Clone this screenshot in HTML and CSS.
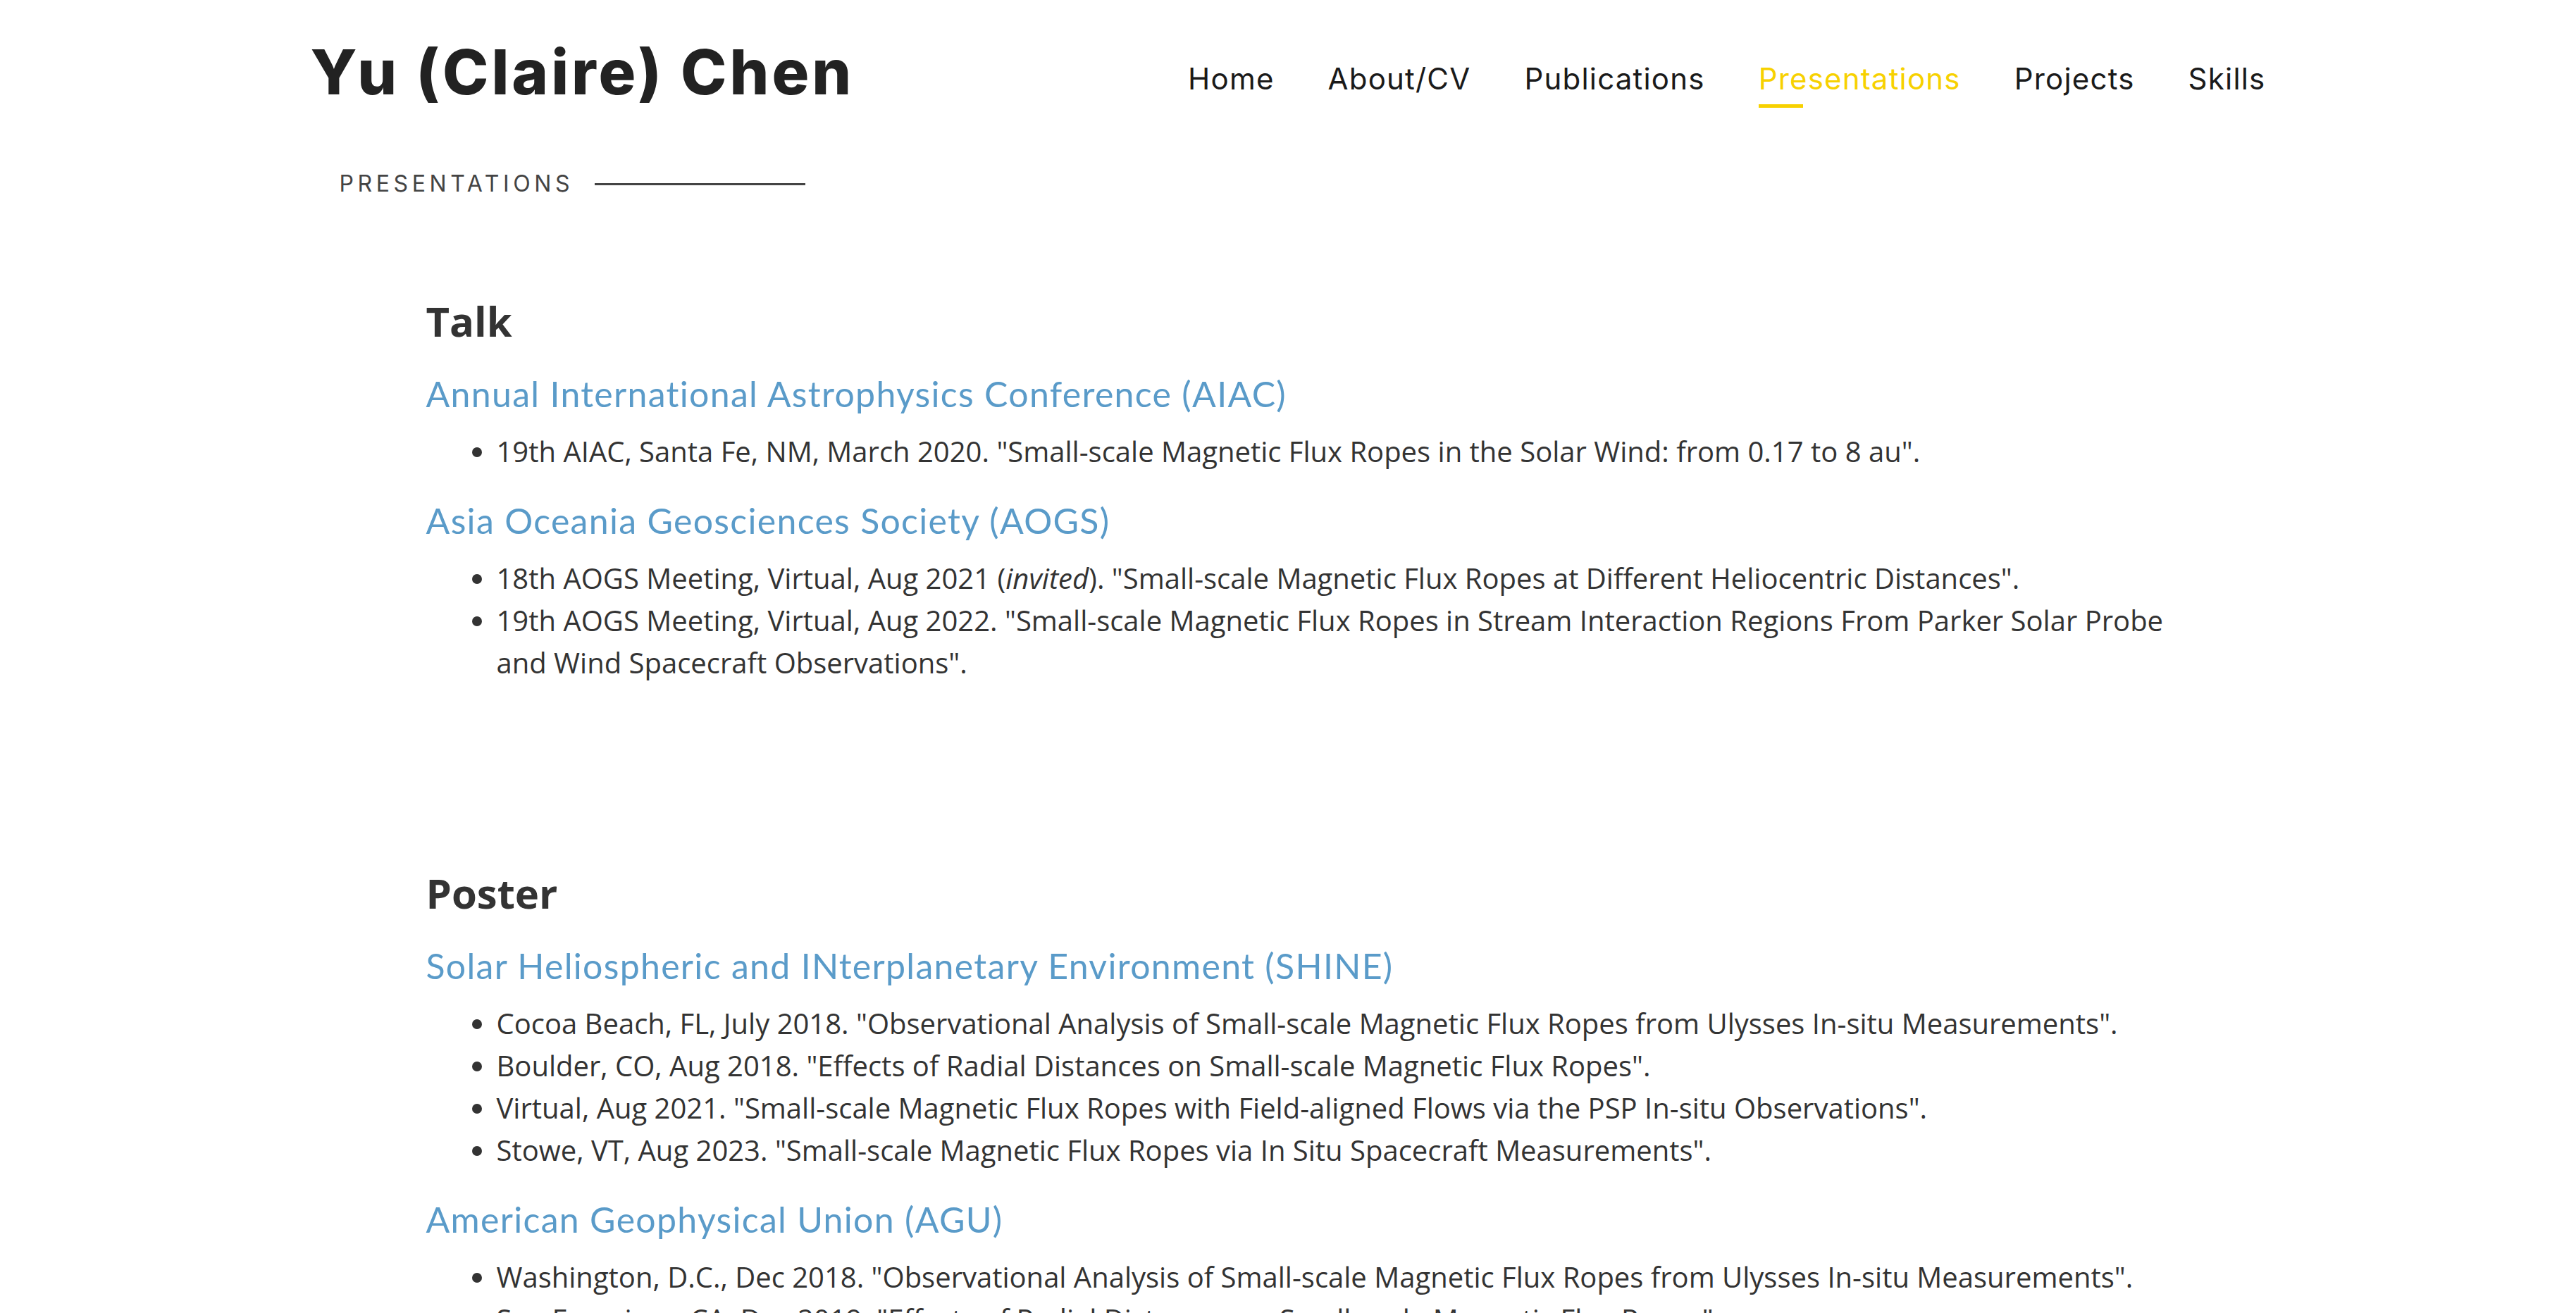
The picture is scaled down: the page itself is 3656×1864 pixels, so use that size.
FILE: index.html
```html
<!DOCTYPE html>
<html lang="en">
<head>
<meta charset="utf-8">
<title>Presentations | Yu (Claire) Chen</title>
<link rel="stylesheet" href="styles.css">
</head>
<body>
<header class="site-header">
  <h1 class="site-title">Yu (Claire) Chen</h1>
  <nav class="site-nav">
    <a class="nav-link" href="#">Home</a>
    <a class="nav-link" href="#">About/CV</a>
    <a class="nav-link" href="#">Publications</a>
    <a class="nav-link is-active" href="#">Presentations</a>
    <a class="nav-link" href="#">Projects</a>
    <a class="nav-link" href="#">Skills</a>
  </nav>
</header>
<main class="page">
  <div class="page-label">
    <span class="page-label-text">PRESENTATIONS</span>
    <span class="page-label-rule"></span>
  </div>
  <article class="content">
    <section class="group">
      <h3 class="group-title">Talk</h3>
      <h4 class="venue"><a href="#">Annual International Astrophysics Conference (AIAC)</a></h4>
      <ul class="items">
        <li>19th AIAC, Santa Fe, NM, March 2020. "Small-scale Magnetic Flux Ropes in the Solar Wind: from 0.17 to 8 au".</li>
      </ul>
      <h4 class="venue"><a href="#">Asia Oceania Geosciences Society (AOGS)</a></h4>
      <ul class="items">
        <li>18th AOGS Meeting, Virtual, Aug 2021 (<em>invited</em>). "Small-scale Magnetic Flux Ropes at Different Heliocentric Distances".</li>
        <li>19th AOGS Meeting, Virtual, Aug 2022. "Small-scale Magnetic Flux Ropes in Stream Interaction Regions From Parker Solar Probe and Wind Spacecraft Observations".</li>
      </ul>
    </section>
    <section class="group">
      <h3 class="group-title">Poster</h3>
      <h4 class="venue"><a href="#">Solar Heliospheric and INterplanetary Environment (SHINE)</a></h4>
      <ul class="items">
        <li>Cocoa Beach, FL, July 2018. "Observational Analysis of Small-scale Magnetic Flux Ropes from Ulysses In-situ Measurements".</li>
        <li>Boulder, CO, Aug 2018. "Effects of Radial Distances on Small-scale Magnetic Flux Ropes".</li>
        <li>Virtual, Aug 2021. "Small-scale Magnetic Flux Ropes with Field-aligned Flows via the PSP In-situ Observations".</li>
        <li>Stowe, VT, Aug 2023. "Small-scale Magnetic Flux Ropes via In Situ Spacecraft Measurements".</li>
      </ul>
      <h4 class="venue"><a href="#">American Geophysical Union (AGU)</a></h4>
      <ul class="items">
        <li>Washington, D.C., Dec 2018. "Observational Analysis of Small-scale Magnetic Flux Ropes from Ulysses In-situ Measurements".</li>
        <li>San Francisco, CA, Dec 2019. "Effects of Radial Distances on Small-scale Magnetic Flux Ropes".</li>
      </ul>
    </section>
  </article>
</main>
</body>
</html>
```
FILE: styles.css
```css
* { box-sizing: border-box; }

html, body {
  margin: 0;
  padding: 0;
  background: #ffffff;
}

body {
  font-family: "Open Sans", "Noto Sans", sans-serif;
  color: #333333;
}

.site-header {
  width: 2775px;
  margin: 0 auto;
  padding-top: 58px;
  display: flex;
  justify-content: space-between;
  align-items: flex-start;
}

.site-title {
  margin: 0;
  font-family: "Inter", "Noto Sans", sans-serif;
  font-weight: 800;
  font-size: 88px;
  line-height: 88px;
  color: #222222;
  letter-spacing: 4px;
}

.site-nav {
  display: flex;
  gap: 76px;
  padding-top: 33px;
}

.nav-link {
  position: relative;
  font-family: "Inter", "Noto Sans", sans-serif;
  font-weight: 400;
  font-size: 42px;
  line-height: 42px;
  letter-spacing: 1.2px;
  color: #1a1a1a;
  text-decoration: none;
}

.nav-link.is-active {
  color: #f7d100;
}

.nav-link.is-active::after {
  content: "";
  position: absolute;
  left: 0;
  top: 57px;
  width: 63px;
  height: 5px;
  background: #f7d100;
}

.page {
  width: 2775px;
  margin: 0 auto;
}

.page-label {
  display: flex;
  align-items: center;
  margin-top: 99px;
  padding-left: 41px;
}

.page-label-text {
  font-family: "Inter", "Noto Sans", sans-serif;
  font-size: 32px;
  line-height: 32px;
  letter-spacing: 0.175em;
  color: #444444;
}

.page-label-rule {
  width: 299px;
  height: 3px;
  margin-left: 30px;
  background: #444444;
}

.content {
  margin-left: 164px;
  margin-top: 144px;
  width: 2495px;
}

.group {
  margin-bottom: 262px;
}

.group-title {
  margin: 0 0 2px;
  font-family: "Open Sans", sans-serif;
  font-weight: 700;
  font-size: 58px;
  line-height: 70px;
  color: #333333;
}

.venue {
  margin: 38px 0 22px;
  font-family: "Lato", "Open Sans", sans-serif;
  font-weight: 400;
  font-size: 50px;
  line-height: 60px;
  letter-spacing: 1.3px;
}

.venue a {
  color: #5a9bc9;
  text-decoration: none;
}

.items {
  margin: 0;
  padding-left: 100px;
  font-size: 40px;
  line-height: 60px;
  color: #333333;
}
```
